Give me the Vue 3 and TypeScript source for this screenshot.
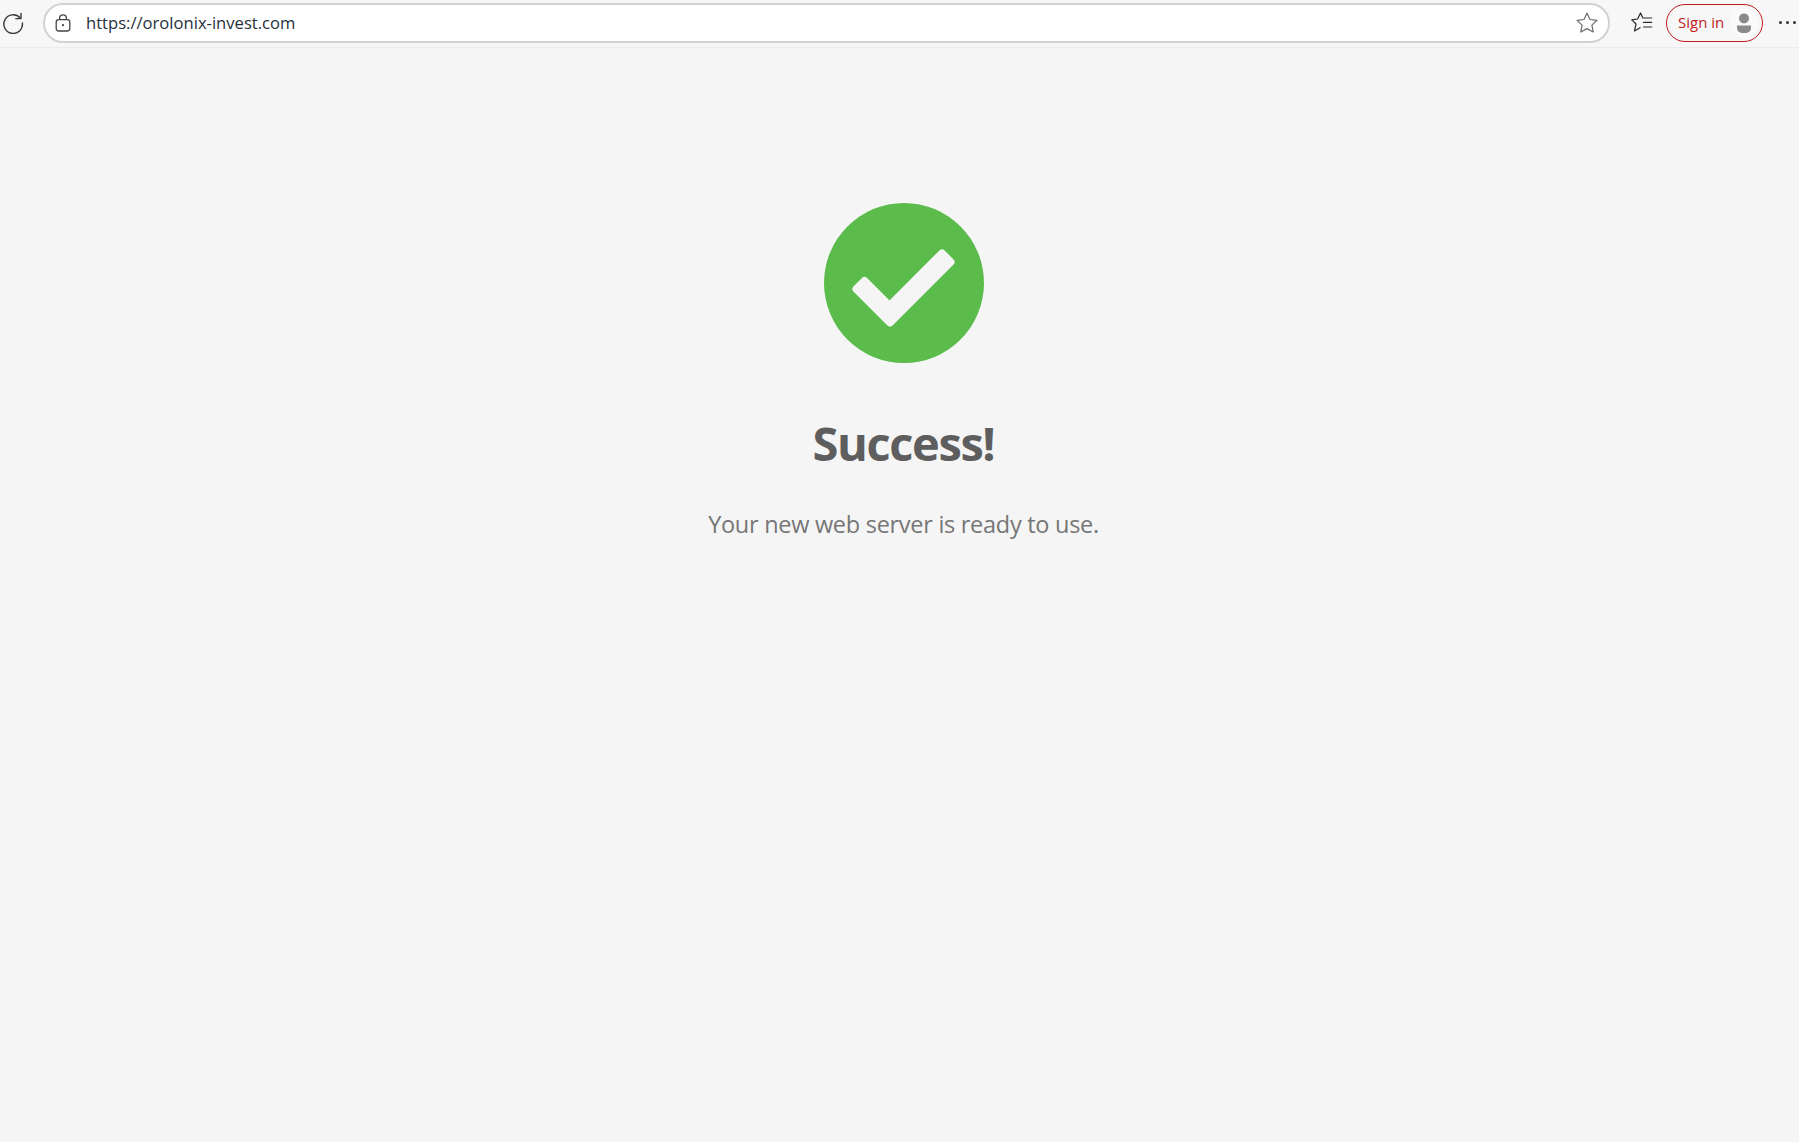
<template>
  <div class="page">
    <header class="toolbar">
      <button class="reload" aria-label="Reload">
        <svg width="22" height="22" viewBox="0 0 22 22" fill="none" stroke="#3a3a3a" stroke-width="1.4">
          <path d="M18 5.800A9.300 9.300 0 1 0 20.400 11" stroke-linecap="round" />
          <path d="M19 1.400v5.200h-5.200" stroke-linecap="round" stroke-linejoin="round" />
        </svg>
      </button>
      <div class="address">
        <svg class="lock" width="16" height="18" viewBox="0 0 16 18" fill="none" stroke="#444" stroke-width="1.3">
          <rect x="1.200" y="5.600" width="13.600" height="11.400" rx="2.400" />
          <path d="M4.600 5.600V4.200a3.400 3.400 0 0 1 6.800 0v1.400" />
          <circle cx="8" cy="11.200" r="1.100" fill="#444" stroke="none" />
        </svg>
        <span class="url">https://orolonix-invest.com</span>
        <svg class="star" width="22" height="22" viewBox="0 0 22 22" fill="none" stroke="#6a6a6a" stroke-width="1.2" stroke-linejoin="round">
          <path d="M11 1.200l3 6.300 6.900.9-5 4.700 1.300 6.900-6.200-3.400-6.200 3.400 1.300-6.900-5-4.700 6.900-.9z" />
        </svg>
      </div>
      <svg class="favs" width="22" height="22" viewBox="0 0 22 22" fill="none" stroke="#2b2b2b" stroke-width="1.200" stroke-linejoin="round">
        <path d="M12.200 6.600L9.500 1L6.600 7L.8 7.800L5 12L3.500 18.900L9.500 15.500" />
        <path d="M13 6h7.700M12.500 10.400h8.200M12.500 15h8.200" stroke-linecap="round" />
      </svg>
      <div class="signin">
        <span class="signin-text">Sign in</span>
        <span class="avatar">
          <svg width="16" height="20" viewBox="0 0 16 20" fill="#8a8a8a">
            <circle cx="8" cy="5.400" r="5" />
            <path d="M1 12.400h14v2.600a5 5 0 0 1-5 5H6a5 5 0 0 1-5-5z" />
          </svg>
        </span>
      </div>
      <div class="dots"><i></i><i></i><i></i></div>
    </header>

    <main class="content">
      <svg class="check" width="160" height="160" viewBox="0 0 160 160">
        <circle cx="80" cy="80" r="80" fill="#5bbb4b" />
        <path
          d="M32.500 86L40.500 78L65.500 103L118 50.500L126.500 59L66 119.500Z"
          fill="#f5f5f5"
          stroke="#f5f5f5"
          stroke-width="8"
          stroke-linejoin="round"
        />
      </svg>
      <h1 class="title">Success!</h1>
      <p class="subtitle">Your new web server is ready to use.</p>
    </main>
  </div>
</template>

<script setup lang="ts">
</script>

<style>
html,
body {
  margin: 0;
  background: #f5f5f5;
}
</style>

<style scoped>
.page {
  height: 1142px;
  overflow: hidden;
  background: #f5f5f5;
  font-family: "Open Sans", "Noto Sans", sans-serif;
}

.toolbar {
  height: 48px;
  display: flex;
  align-items: center;
  padding: 0 0 2px 2px;
  box-sizing: border-box;
  background: #f7f7f7;
  border-bottom: 1px solid #ebebeb;
}

.reload {
  width: 22px;
  height: 22px;
  padding: 0;
  border: none;
  background: none;
  display: flex;
  margin-right: 19px;
}

.address {
  width: 1567px;
  height: 40px;
  box-sizing: border-box;
  display: flex;
  align-items: center;
  padding: 0 10px;
  background: #fff;
  border: 2px solid #d2d2d2;
  border-radius: 20px;
}

.url {
  margin-left: 15px;
  flex: 1;
  font-size: 16.600px;
  color: #26303a;
}

.favs {
  margin-left: 21px;
}

.signin {
  margin-left: 13px;
  width: 97px;
  height: 38px;
  box-sizing: border-box;
  display: flex;
  align-items: center;
  padding: 0 4px 0 11px;
  border: 1.500px solid #c01c20;
  border-radius: 19px;
}

.signin-text {
  flex: 1;
  padding-bottom: 2px;
  font-size: 15px;
  color: #c01c20;
}

.avatar {
  width: 28px;
  height: 28px;
  display: flex;
  align-items: center;
  justify-content: center;
  border-radius: 50%;
  background: #fafafa;
}

.dots {
  margin-left: 16px;
  display: flex;
  gap: 4px;
}

.dots i {
  width: 3px;
  height: 3px;
  border-radius: 50%;
  background: #333;
}

.content {
  display: flex;
  flex-direction: column;
  align-items: center;
  padding: 155px 0 0 8px;
}

.title {
  margin: 49px 0 0;
  font-size: 47px;
  line-height: 62px;
  font-weight: 700;
  letter-spacing: -1.400px;
  color: #5e5e5e;
}

.subtitle {
  margin: 34px 0 0;
  font-size: 23.500px;
  line-height: 32px;
  letter-spacing: -0.280px;
  color: #767676;
}
</style>
